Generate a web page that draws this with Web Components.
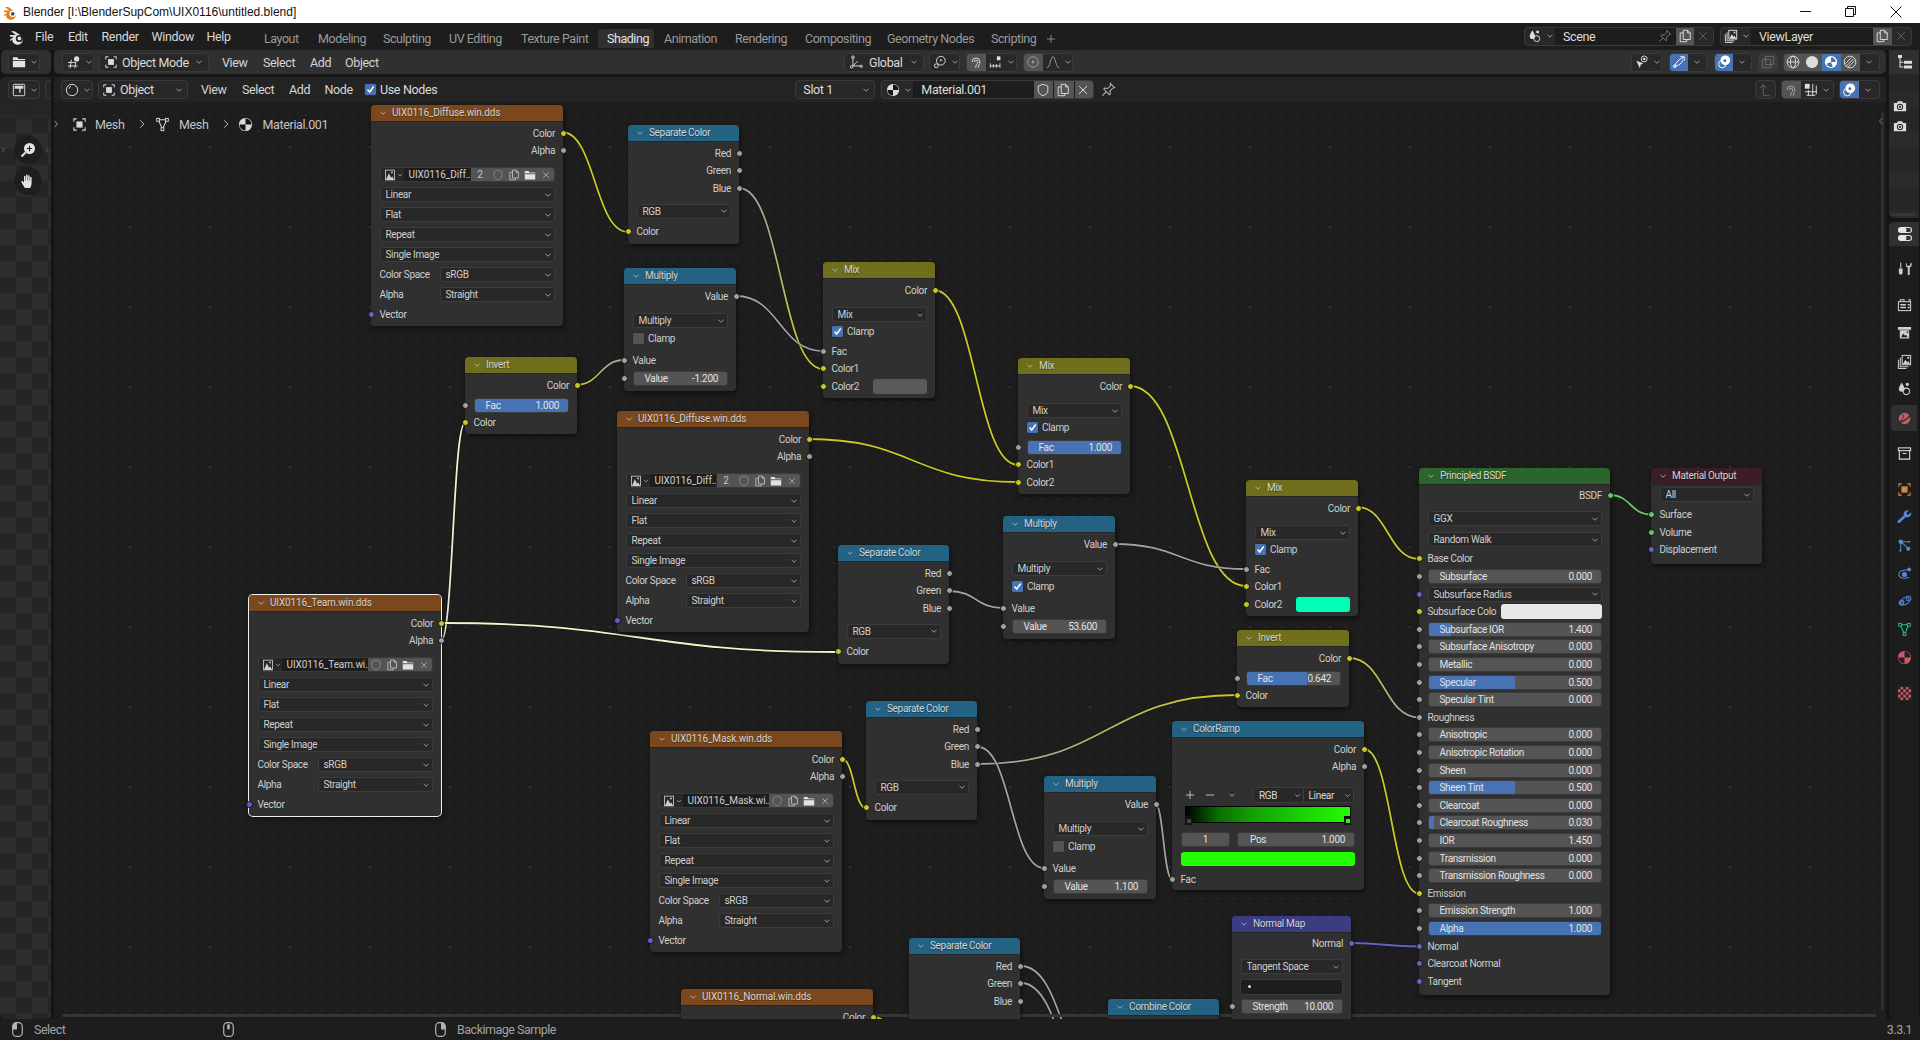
<!DOCTYPE html>
<html>
<head>
<meta charset="utf-8">
<title>Blender</title>
<style>
  html, body { margin: 0; padding: 0; width: 1920px; height: 1040px; overflow: hidden; background: #151515; }
  body { font-family: Roboto, "Liberation Sans", sans-serif; }
</style>
</head>
<body>
<bl-app>
  <bl-node-editor slot="editor">
    <bl-wires></bl-wires>

    <bl-image-node x="371" y="105" name="UIX0116_Diffuse.win.dds" short="UIX0116_Diff…" num="2"></bl-image-node>
    <bl-image-node x="617" y="411" name="UIX0116_Diffuse.win.dds" short="UIX0116_Diff…" num="2"></bl-image-node>
    <bl-image-node x="249" y="595" name="UIX0116_Team.win.dds" short="UIX0116_Team.wi…" sel></bl-image-node>
    <bl-image-node x="650" y="731" name="UIX0116_Mask.win.dds" short="UIX0116_Mask.wi…"></bl-image-node>
    <bl-image-node x="681" y="989" name="UIX0116_Normal.win.dds" clipped></bl-image-node>

    <bl-separate-node x="628" y="125"></bl-separate-node>
    <bl-separate-node x="838" y="545"></bl-separate-node>
    <bl-separate-node x="866" y="701"></bl-separate-node>
    <bl-separate-node x="909" y="938" clipped></bl-separate-node>

    <bl-multiply-node x="624" y="268" val="-1.200"></bl-multiply-node>
    <bl-multiply-node x="1003" y="516" val="53.600" clamp></bl-multiply-node>
    <bl-multiply-node x="1044" y="776" val="1.100"></bl-multiply-node>

    <bl-mix-node x="823" y="262" swatch="#5a5a5a"></bl-mix-node>
    <bl-mix-node x="1018" y="358" fac="1.000"></bl-mix-node>
    <bl-mix-node x="1246" y="480" swatch="#00ffb4"></bl-mix-node>

    <bl-invert-node x="465" y="357" val="1.000" pct="100"></bl-invert-node>
    <bl-invert-node x="1237" y="630" val="0.642" pct="64.2"></bl-invert-node>

    <bl-node x="1172" y="721" w="192" h="169" kind="conv" label="ColorRamp">
      <bl-sock out c="y">Color</bl-sock>
      <bl-sock out c="g">Alpha</bl-sock>
      <bl-ramp></bl-ramp>
      <bl-sock c="g" mt="4.25">Fac</bl-sock>
    </bl-node>

    <bl-node x="1232" y="916" w="119" h="110" kind="vec" label="Normal Map">
      <bl-sock out c="p" mt="-1">Normal</bl-sock>
      <bl-sel mt="7.25">Tangent Space</bl-sel>
      <bl-uvfield></bl-uvfield>
      <bl-sock c="g" mt="2.5"><bl-slider label="Strength" val="10.000"></bl-slider></bl-sock>
    </bl-node>

    <bl-node x="1108" y="999" w="111" h="60" kind="conv" label="Combine Color"></bl-node>

    <bl-principled-node x="1419" y="468"></bl-principled-node>

    <bl-node x="1651" y="468" w="111" h="96" kind="out" label="Material Output">
      <bl-sel>All</bl-sel>
      <bl-sock c="n" mt="3.6">Surface</bl-sock>
      <bl-sock c="n">Volume</bl-sock>
      <bl-sock c="p">Displacement</bl-sock>
    </bl-node>
  </bl-node-editor>
</bl-app>

<script>
const ICONS = {
  chev: '<path class="s" d="M4 6l4 4 4-4"/>',
  right: '<path class="s" d="M5.5 3l5 5-5 5"/>',
  left: '<path class="s" d="M10.5 3l-5 5 5 5"/>',
  obj: '<path class="s" d="M2 5V2h3M11 2h3v3M14 11v3h-3M5 14H2v-3"/><rect class="f" x="4.7" y="4.7" width="6.6" height="6.6"/>',
  folder: '<path class="f" d="M1 2.5h5l1.5 2H15V14H1z"/><path d="M1 6.3h14" stroke="#333" stroke-width="1"/>',
  noded: '<rect class="s" x="1.5" y="1.5" width="13" height="13" rx="1"/><path class="f" d="M3 3h10v3.5h-3.2V11H8.2V6.5H3z"/>',
  xsnap: '<path class="s" d="M1 8.5h9M1 12.5h11M5 5.5l-1.5 9.5M10 8l-1 7"/><circle class="f" cx="11" cy="4.5" r="3"/>',
  sphere: '<circle class="s" cx="8" cy="8" r="6.5"/><path class="s" d="M4.5 6.5a4 4 0 0 1 2.2-2.6"/>',
  mesh: '<path class="s" d="M3.5 3h9L8 13z"/><rect x="1.8" y="1.5" width="3" height="3" fill="#1d1d1d" stroke="currentColor"/><rect x="11.2" y="1.5" width="3" height="3" fill="#1d1d1d" stroke="currentColor"/><rect x="6.5" y="11.5" width="3" height="3" fill="#1d1d1d" stroke="currentColor"/>',
  mat: '<circle class="f" cx="8" cy="8" r="7"/><path fill="#151515" d="M8 8V1.6A6.4 6.4 0 0 1 14.4 8zM8 8v6.4A6.4 6.4 0 0 1 1.6 8z"/>',
  zoom: '<circle class="f" cx="9.5" cy="6.5" r="5.5"/><path d="M9.5 3.8v5.4M6.8 6.5h5.4" stroke="#222" stroke-width="1.2"/><path d="M5.5 10.5l-4 4" stroke="currentColor" stroke-width="2"/>',
  hand: '<path class="f" d="M5 15c-1-1.2-3-4.5-3.6-6-.3-1 1-1.4 1.6-.6L4 9.6V3.5c0-1 1.5-1 1.5 0V7.4H6V2.2c0-1 1.6-1 1.6 0v5.2h.5V3c0-1 1.5-1 1.5 0v4.6h.5V4.6c0-1 1.5-1 1.5 0V10c0 2-.8 3.4-1.4 5z"/>',
  x: '<path class="s" d="M3.5 3.5l9 9M12.5 3.5l-9 9"/>',
  plus: '<path class="s" d="M8 2.5v11M2.5 8h11"/>',
  minus: '<path class="s" d="M2.5 8h11"/>',
  shield: '<path class="s" d="M8 1.5l5.5 2v5c0 3-2.5 5-5.5 6-3-1-5.5-3-5.5-6v-5z"/>',
  copy: '<path class="s" d="M6 1.5h5l3 3v7.5H6zM11 1.5v3h3M6 4.5H2.5v10H10V12"/>',
  pin: '<path class="s" d="M10 1.5l4.5 4.5-2 .5-3 3 .5 3-1 1-6-6 1-1 3 .5 3-3zM5.5 10.5L1.5 14.5"/>',
  img: '<rect class="s" x="2" y="1.5" width="12" height="13"/><path class="f" d="M2.5 14.5l4-9 3 6 1.5-2 2.5 5z"/><rect class="f" x="9.5" y="3.5" width="2.2" height="2.2"/>',
  cam: '<path class="f" d="M1 4.5h3.5l1-2h5l1 2H15v9.5H1z"/><circle cx="8" cy="9" r="3.6" fill="#222"/><circle class="f" cx="8" cy="9" r="2.5"/><circle cx="8" cy="9" r="1.2" fill="#222"/>',
  scene: '<path class="f" d="M5 1.5c1.2 2.5 3 4.2 3 7 0 1.8-1.3 3-3 3s-3-1.2-3-3c0-2.8 1.8-4.5 3-7z"/><circle class="s" cx="10" cy="11" r="3.4"/><circle class="f" cx="11" cy="3.5" r="1.7"/>',
  layer: '<path class="s" d="M3.5 4v9.5H12M1.5 6v9.5H10"/><rect class="s" x="5.5" y="1.5" width="9" height="10"/><path class="f" d="M6 11l3-5 2 3 1-1.5 2 3.5z"/><rect class="f" x="11" y="3" width="2" height="2"/>',
  globalx: '<path class="s" d="M4.5 3v9.5H14M4.5 12.5L10 7"/><circle class="s" cx="4.5" cy="2.5" r="1.5"/><circle class="s" cx="3" cy="13.5" r="1.5"/><circle class="s" cx="14" cy="13" r="1.3"/>',
  link: '<circle class="s" cx="9" cy="6.5" r="5"/><circle cx="3.8" cy="12.3" r="2.2" fill="#282828" stroke="currentColor" stroke-width="1.1"/><circle class="f" cx="9" cy="6" r="1.1"/>',
  magnet: '<path class="s" stroke-width="1.5" d="M3.5 8a4.5 4.5 0 0 1 9 0c0 3-2 3.5-2 6.5M6 8a2 2 0 0 1 4 0c0 2.5-2.5 3.5-2.5 6.5"/>',
  snapinc: '<path class="s" d="M1.5 9.5v5M5 10.5v4M8.5 10.5v4M12.5 9.5v5M1.5 12.5h11"/><rect class="f" x="9" y="1.5" width="4" height="4.5"/>',
  prop: '<circle class="s" cx="8" cy="8" r="6"/><circle class="f" cx="8" cy="8" r="1.6"/>',
  curve: '<path class="s" d="M1 14.5C5 14.5 5 2 8 2s3 12.5 7 12.5"/>',
  selx: '<path class="f" d="M1.5 6.5l8 3-3 1.5-1 4z"/><circle class="s" cx="10.5" cy="4.5" r="3.4"/><circle class="f" cx="10.5" cy="4.5" r="1.5"/>',
  gizmo: '<path class="s" d="M3 13C4.5 8 8 5 13.5 2.5M9.5 2h4.5v4.5M3 13c5-1 8-3.5 9.5-7"/><circle class="s" cx="3" cy="13" r="1.5"/>',
  over: '<circle class="s" cx="6" cy="10.5" r="4.2"/><circle class="f" cx="9.5" cy="6" r="5.5"/><circle cx="9" cy="6.5" r="1.7" fill="#4772b3"/>',
  xray: '<rect class="s" x="5" y="1.5" width="9.5" height="9.5" rx="1"/><rect class="s" x="1.5" y="5" width="9.5" height="9.5" rx="1"/><rect class="f" x="5" y="8" width="1.2" height="1.2"/>',
  wire: '<circle class="s" cx="8" cy="8" r="6.7"/><ellipse class="s" cx="8" cy="8" rx="3" ry="6.7"/><path class="s" d="M1.3 8h13.4"/>',
  solid: '<circle class="f" cx="8" cy="8" r="7"/>',
  matsph: '<circle class="f" cx="8" cy="8" r="7"/><path fill="#4772b3" d="M8 2.6V8l5.4 0A5.4 5.4 0 0 0 8 2.6zM8 8l-5 2a5.4 5.4 0 0 0 7 3.5z"/>',
  rend: '<circle class="s" cx="8" cy="8" r="6.7"/><path class="s" d="M4 12.5l8-8M6 13.7l7-7M2.6 10l7-7"/>',
  up: '<path class="s" d="M2.5 5.5L6 2l3.5 3.5M6 2v11.5l2 1h5"/>',
  gridsnap: '<rect class="f" x="1" y="1" width="5.5" height="5.5"/><path class="s" d="M10 1v14M14 3v10M1 10h14M3 14h10M5 8v7"/>',
  tree: '<rect class="f" x="1" y="1" width="4" height="3"/><path class="s" d="M3 4v9h3.5M3 8.2h3.5"/><rect class="f" x="7" y="6.8" width="8" height="3"/><rect class="f" x="7" y="11.5" width="8" height="3"/>',
  toggles: '<rect class="s" x="1.5" y="1.5" width="13" height="5" rx="2.5"/><rect class="f" x="1.5" y="1.5" width="8" height="5" rx="2.5"/><rect class="s" x="1.5" y="9.5" width="13" height="5" rx="2.5"/><rect class="f" x="1.5" y="9.5" width="8" height="5" rx="2.5"/>',
  tools: '<path class="s" d="M4 1.5v6"/><path class="f" d="M2 8h4v4.5a2 2 0 0 1-4 0zM9.5 1.5v4l2 1.5v8h2V7l2-1.5v-4L14 3v2h-3.5V3z"/>',
  render: '<rect class="s" x="1.5" y="5" width="13" height="9.5"/><path class="s" d="M3.5 5V3h4v2M12 3h2v2"/><path class="f" d="M3.5 7.5h6V9h-6zM3.5 10.5h6V12h-6zM11.5 7.5h2V9h-2zM11.5 10.5h2V12h-2z"/>',
  output: '<path class="f" d="M1 2h14v3H1zM3 5.5h10v9H3z"/><path fill="#222" d="M4.5 13l2-4 2 2.5 1-1.2 2 2.7zM10.5 7h1.5v1.5h-1.5z"/>',
  world: '<circle class="f" cx="8" cy="8" r="6.2"/><path d="M1 12.5C6 12 12 8 15 3.5" stroke="#2f2f2f" stroke-width="1.4" fill="none"/><path d="M3 2.5c3 .3 5 3 3.5 5S3 9 5 12" stroke="#2f2f2f" stroke-width="1" fill="none"/>',
  box: '<rect class="s" x="1.5" y="2" width="13" height="3"/><path class="s" d="M2.5 5v9h11V5M6 8h4"/>',
  wrench: '<path class="f" d="M15 2.5l-2.8 2.5-1.7-.5-.4-1.8L12.7.5A4.2 4.2 0 0 0 7.3 5.7L1 11.5c-1.2 1.3.6 3.3 2 2l6.4-6a4.2 4.2 0 0 0 5.6-5z"/>',
  part: '<circle class="f" cx="4" cy="4" r="2.4"/><circle class="f" cx="13" cy="4" r="1.1"/><circle class="f" cx="3.5" cy="13.5" r="1.2"/><path class="s" d="M4 4h9M4 4v9.5M4 4l7 6"/><circle class="f" cx="12" cy="11.5" r="2.2"/>',
  phys: '<path class="s" d="M13.5 5.5C9 3 2 5 2 9c0 4 7 5 11 3"/><circle class="f" cx="8" cy="9" r="2.7"/><circle class="f" cx="13" cy="3.5" r="2"/>',
  cons: '<path class="s" d="M2 9.5C2 7 11 1.5 13.5 2.5S15 7 12 9.5 3 13.5 2 9.5z"/><circle class="f" cx="5.5" cy="9" r="2.5"/><circle cx="5.5" cy="9" r="1" fill="#222"/><circle class="s" cx="11.5" cy="5.5" r="1.6"/>',
  tex: '<rect class="f" x="1" y="1" width="14" height="14"/><path fill="#222" d="M1 1h2.8v2.8H1zM6.6 1h2.8v2.8H6.6zM12.2 1H15v2.8h-2.8zM3.8 3.8h2.8v2.8H3.8zM9.4 3.8h2.8v2.8H9.4zM1 6.6h2.8v2.8H1zM6.6 6.6h2.8v2.8H6.6zM12.2 6.6H15v2.8h-2.8zM3.8 9.4h2.8v2.8H3.8zM9.4 9.4h2.8v2.8H9.4zM1 12.2h2.8V15H1zM6.6 12.2h2.8V15H6.6zM12.2 12.2H15V15h-2.8z"/>',
  redmat: '<circle class="f" cx="8" cy="8" r="7"/><path fill="#222" d="M8 8V1.5A6.5 6.5 0 0 1 14.5 8zM8 8v6.5A6.5 6.5 0 0 1 1.5 8z"/>',
  logo: '<path class="f" d="M1 6.5h5.5L1.8 3h3.4l5 3.4a5 5 0 1 1-6.7 6.8 4 4 0 0 1-.2-2.7L1.2 12.2l-.5-1 3.8-3H1z"/><circle cx="9.7" cy="9.8" r="3.3" fill="#1d1d1d"/><circle class="f" cx="9.7" cy="9.8" r="1.8"/>',
  logoc: '<path fill="#e87d0d" d="M1 6.5h5.5L1.8 3h3.4l5 3.4a5 5 0 1 1-6.7 6.8 4 4 0 0 1-.2-2.7L1.2 12.2l-.5-1 3.8-3H1z"/><circle cx="9.7" cy="9.8" r="3.3" fill="#fff"/><circle cx="9.7" cy="9.8" r="1.9" fill="#265787"/>',
  mouseL: '<rect class="s" x="3.5" y="1.5" width="9" height="13" rx="3.5"/><path class="f" d="M3.5 8V5A3.5 3.5 0 0 1 7.5 1.5V8z"/>',
  mouseM: '<rect class="s" x="3.5" y="1.5" width="9" height="13" rx="3.5"/><rect class="f" x="6.8" y="3" width="2.4" height="5" rx="1"/>',
  mouseR: '<rect class="s" x="3.5" y="1.5" width="9" height="13" rx="3.5"/><path class="f" d="M8.5 8V1.5A3.5 3.5 0 0 1 12.5 5V8z"/>'
};

const SOCK = { y: "#c7c729", g: "#a1a1a1", p: "#6363c7", n: "#63c763" };

class BlBase extends HTMLElement {
  constructor() {
    super();
    this.attachShadow({ mode: "open" });
  }
  connectedCallback() { this.render(); }
  attr(n, d) { const v = this.getAttribute(n); return v === null ? d : v; }
  draw(css, html) { this.shadowRoot.innerHTML = `<style>${css}</style>${html}`; }
}

class BlIcon extends BlBase {
  render() {
    const size = this.attr("size", 16);
    this.draw(`
      :host { display: inline-flex; flex: none; width: ${size}px; height: ${size}px; }
      svg { width: 100%; height: 100%; display: block; }
      .s { fill: none; stroke: currentColor; stroke-width: 1.1; }
      .f { fill: currentColor; }
    `, `<svg viewBox="0 0 16 16">${ICONS[this.attr("name", "x")] || ""}</svg>`);
  }
}

// one cell of a rounded widget group
class BlCell extends BlBase {
  render() {
    const w = this.attr("w", "");
    const on = this.attr("on", "");
    const bg = on === "blue" ? "#4772b3" : on === "grey" ? "#545454" : on === "dark" ? "#1d1d1d" : "transparent";
    const icon = this.attr("icon", "");
    const isize = this.attr("isize", 14);
    this.draw(`
      :host { display: flex; align-items: center; flex: none; box-sizing: border-box; height: 100%; background: ${bg};
        ${w ? `width:${w}px;` : ""} padding: 0 ${this.attr("pad", 3)}px; gap: 3px; color: ${this.attr("color", "#dcdcdc")};
        ${this.hasAttribute("sep") ? "border-left:1px solid #1a1a1a;" : ""} ${this.hasAttribute("center") ? "justify-content:center;" : ""} }
      .t { flex: 1; white-space: nowrap; overflow: hidden; padding-left: ${this.attr("tl", 0)}px; }
      .v { color: #cfcfcf; }
    `, `${icon ? `<bl-icon name="${icon}" size="${isize}"></bl-icon>` : ""}
        ${this.hasAttribute("text") ? `<span class="t"><slot></slot></span>` : ""}
        ${this.attr("after", "") ? `<bl-icon name="${this.attr("after")}" size="14" style="color:#7a7a7a"></bl-icon>` : ""}
        ${this.hasAttribute("chev") ? `<bl-icon class="v" name="chev" size="10"></bl-icon>` : ""}`);
  }
}

class BlGroup extends BlBase {
  render() {
    this.draw(`
      :host { display: flex; flex: none; box-sizing: border-box; height: ${this.attr("h", 19)}px; margin-left: ${this.attr("ml", 0)};
        border: 1px solid #3a3a3a; border-radius: 4px; overflow: hidden; background: ${this.attr("bg", "#282828")};
        font-size: 12.5px; letter-spacing: -0.35px; color: #dcdcdc; }
    `, `<slot></slot>`);
  }
}

class BlMenu extends BlBase {
  render() {
    const w = this.attr("w", "");
    this.draw(`
      :host { display: block; flex: none; ${w ? `width:${w}px;` : ""} margin-left: ${this.attr("ml", 0)}px;
        font-size: 12.5px; letter-spacing: -0.35px; color: ${this.attr("color", "#d4d4d4")}; white-space: nowrap; }
    `, `<slot></slot>`);
  }
}

class BlTitleBar extends BlBase {
  render() {
    this.draw(`
      :host { display: flex; align-items: center; height: 23px; background: #fff; color: #111;
        font: 12px "Liberation Sans", sans-serif; padding-left: 3px; box-sizing: border-box; }
      span { margin-left: 4px; flex: 1; }
      .ctl { width: 45px; height: 23px; display: flex; align-items: center; justify-content: center; color: #111; }
      .end { width: 2px; }
    `, `<bl-icon name="logoc" size="16"></bl-icon>
        <span>Blender  [I:\\BlenderSupCom\\UIX0116\\untitled.blend]</span>
        <div class="ctl"><svg width="11" height="11"><path d="M0 5.5h11" stroke="#111"/></svg></div>
        <div class="ctl"><svg width="11" height="11"><path d="M.5 2.5h8v8h-8zM2.5 2.5v-2h8v8h-2" fill="none" stroke="#111"/></svg></div>
        <div class="ctl"><svg width="12" height="12"><path d="M.5.5l11 11M11.5.5l-11 11" stroke="#111"/></svg></div>
        <div class="end"></div>`);
  }
}

class BlTopBar extends BlBase {
  render() {
    const menus = [["File", 33], ["Edit", 33.5], ["Render", 50], ["Window", 55], ["Help", 47]];
    const tabs = [["Layout", 54], ["Modeling", 65], ["Sculpting", 66], ["UV Editing", 72], ["Texture Paint", 86], ["Shading", 57],
      ["Animation", 71], ["Rendering", 70], ["Compositing", 82], ["Geometry Nodes", 104], ["Scripting", 56]];
    this.draw(`
      :host { display: flex; align-items: stretch; height: 27px; background: #1d1d1d; box-sizing: border-box; position: relative; }
      .logo { width: 35px; flex: none; display: flex; align-items: center; padding-left: 9px; box-sizing: border-box; color: #e4e4e4; }
      .menu { display: flex; align-items: center; height: 27px; padding-bottom: 1px; box-sizing: border-box; width: 219px; flex: none; }
      .tabs { display: flex; height: 19px; margin-top: 6px; align-items: center; font-size: 12.5px; letter-spacing: -.45px; color: #9a9a9a; }
      .tab { padding: 0 0 0 10px; height: 19px; line-height: 20px; white-space: nowrap; box-sizing: border-box; flex: none; }
      .tab.on { background: #303030; color: #e6e6e6; border-radius: 4px 4px 0 0; padding-left: 9px; margin-left: 1px; }
      .plus { margin-left: 8px; color: #9a9a9a; }
      .right { margin-left: auto; display: flex; align-items: center; padding-right: 8px; padding-bottom: 1px; box-sizing: border-box; }
    `, `<div class="logo"><bl-icon name="logo" size="17"></bl-icon></div>
      <div class="menu">${menus.map(m => `<bl-menu w="${m[1]}" color="#d8d8d8">${m[0]}</bl-menu>`).join("")}</div>
      <div class="tabs">${tabs.map(t => `<div class="tab ${t[0] === "Shading" ? "on" : ""}" style="width:${t[0] === "Shading" ? t[1] - 1 : t[1]}px">${t[0]}</div>`).join("")}
        <bl-icon class="plus" name="plus" size="12"></bl-icon></div>
      <div class="right">
        <bl-group>
          <bl-cell w="30" icon="scene" chev></bl-cell>
          <bl-cell w="120" on="dark" text tl="4" after="pin" sep>Scene</bl-cell>
          <bl-cell w="19" on="grey" icon="copy" sep pad="2"></bl-cell>
          <bl-cell w="19" icon="x" color="#5d5d5d" pad="2"></bl-cell>
        </bl-group>
        <bl-group ml="6px">
          <bl-cell w="30" icon="layer" chev></bl-cell>
          <bl-cell w="121" on="dark" text tl="4" sep>ViewLayer</bl-cell>
          <bl-cell w="20" on="grey" icon="copy" sep pad="2"></bl-cell>
          <bl-cell w="19" icon="x" color="#5d5d5d" pad="2"></bl-cell>
        </bl-group>
      </div>`);
  }
}

class BlBar extends BlBase {
  render() {
    this.draw(`
      :host { display: flex; align-items: center; height: ${this.attr("h", 24)}px; box-sizing: border-box; flex: none;
        background: ${this.attr("bg", "#303030")}; border-radius: ${this.attr("radius", "5px")}; padding: 0 6px 0 ${this.attr("pl", 8)}px; }
    `, `<slot></slot>`);
  }
}

class BlViewHeader extends BlBase {
  render() {
    this.draw(`:host { display: block; margin-bottom: 3px; } .push { margin-left: auto; display: flex; align-items: center; }`, `
      <bl-bar>
        <bl-group><bl-cell w="30" icon="xsnap" chev pad="4"></bl-cell></bl-group>
        <bl-group ml="5px"><bl-cell w="108" icon="obj" chev text tl="1" pad="4">Object Mode</bl-cell></bl-group>
        <bl-menu ml="13" w="41">View</bl-menu><bl-menu w="47">Select</bl-menu><bl-menu w="35">Add</bl-menu><bl-menu w="60">Object</bl-menu>
        <bl-group ml="439px"><bl-cell w="78" icon="globalx" chev text tl="3" pad="4">Global</bl-cell></bl-group>
        <bl-group ml="5px"><bl-cell w="29" icon="link" chev pad="3"></bl-cell></bl-group>
        <bl-group ml="6px"><bl-cell w="19" on="grey" icon="magnet" pad="2"></bl-cell><bl-cell w="30" icon="snapinc" chev pad="3"></bl-cell></bl-group>
        <bl-group ml="6px"><bl-cell w="19" on="grey" icon="prop" pad="2" color="#9a9a9a"></bl-cell><bl-cell w="29" icon="curve" chev pad="3" color="#9a9a9a"></bl-cell></bl-group>
        <div class="push">
          <bl-group><bl-cell w="29" icon="selx" chev pad="3"></bl-cell></bl-group>
          <bl-group ml="7px"><bl-cell w="18" on="blue" icon="gizmo" pad="2" color="#fff"></bl-cell><bl-cell w="18" chev pad="4"></bl-cell></bl-group>
          <bl-group ml="7px"><bl-cell w="18" on="blue" icon="over" pad="2" color="#fff"></bl-cell><bl-cell w="18" chev pad="4"></bl-cell></bl-group>
          <bl-group ml="6px" bg="#3a3a3a"><bl-cell w="18" icon="xray" pad="2" color="#6f6f6f"></bl-cell></bl-group>
          <bl-group ml="5px">
            <bl-cell w="19" on="grey" icon="wire" pad="2"></bl-cell><bl-cell w="19" on="grey" icon="solid" pad="2"></bl-cell>
            <bl-cell w="19" on="blue" icon="matsph" pad="2" color="#fff"></bl-cell><bl-cell w="19" on="grey" icon="rend" pad="2"></bl-cell>
            <bl-cell w="19" chev pad="4"></bl-cell>
          </bl-group>
        </div>
      </bl-bar>`);
  }
}

class BlNodeEditor extends BlBase {
  render() {
    this.draw(`
      :host { display: block; position: relative; height: 942px; overflow: hidden; background-color: #1d1d1d;
        background-image: radial-gradient(circle at 1px 1px, #333 1px, transparent 1px), radial-gradient(circle at 1px 1px, #2a2a2a .7px, transparent 1px);
        background-size: 80px 80px, 16px 16px; background-position: 75px 69px, 11px 5px; }
      .crumb { display: flex; align-items: center; height: 16px; margin-top: 14px; padding-left: 0; font-size: 12.5px;
        letter-spacing: -.35px; color: #c4c4c4; white-space: nowrap; }
      .crumb bl-icon { color: #d8d8d8; }
      .sep { color: #b0b0b0; }
      .vbar { position: absolute; right: 2px; top: 35px; bottom: 8px; width: 3px; background: #2c2c2c; border-radius: 2px; }
      .hbar { position: absolute; left: 8px; right: 9px; bottom: 2px; height: 3px; background: #363636; border-radius: 2px; }
      .coll { position: absolute; right: 0; top: 39px; color: #9a9a9a; }
    `, `
      <bl-bar bg="#232323" radius="5px 5px 0 0" h="25" pl="7">
        <bl-group><bl-cell w="30" icon="sphere" chev pad="3"></bl-cell></bl-group>
        <bl-group ml="5px"><bl-cell w="88" icon="obj" chev text tl="1" pad="3">Object</bl-cell></bl-group>
        <bl-menu ml="13" w="41">View</bl-menu><bl-menu w="47">Select</bl-menu><bl-menu w="35.5">Add</bl-menu><bl-menu w="39.5">Node</bl-menu>
        <bl-check on label="Use Nodes" style="height:19px;font-size:12.5px;letter-spacing:-.35px;color:#dcdcdc"></bl-check>
        <bl-group ml="358px"><bl-cell w="78" chev text tl="4" pad="3">Slot 1</bl-cell></bl-group>
        <bl-group ml="6px">
          <bl-cell w="31" icon="mat" chev pad="4"></bl-cell>
          <bl-cell w="120" on="dark" text tl="4" sep>Material.001</bl-cell>
          <bl-cell w="20" on="grey" icon="shield" sep pad="2"></bl-cell>
          <bl-cell w="21" on="grey" icon="copy" sep pad="2"></bl-cell>
          <bl-cell w="19" on="grey" icon="x" sep pad="1"></bl-cell>
        </bl-group>
        <bl-icon name="pin" size="15" style="margin-left:7px;color:#b8b8b8"></bl-icon>
        <div style="margin-left:auto;display:flex;align-items:center">
          <bl-group bg="#2a2a2a"><bl-cell w="19" icon="up" pad="2" color="#666"></bl-cell></bl-group>
          <bl-group ml="5px"><bl-cell w="19" on="grey" icon="magnet" pad="2" color="#aaa"></bl-cell><bl-cell w="32" icon="gridsnap" chev pad="3"></bl-cell></bl-group>
          <bl-group ml="5px"><bl-cell w="19" on="blue" icon="over" pad="2" color="#fff"></bl-cell><bl-cell w="20" chev pad="4"></bl-cell></bl-group>
        </div>
      </bl-bar>
      <div class="crumb">
        <bl-icon class="sep" name="right" size="10" style="margin-left:-3px"></bl-icon>
        <bl-icon name="obj" size="15" style="margin-left:11px"></bl-icon><span style="margin-left:8px">Mesh</span>
        <bl-icon class="sep" name="right" size="12" style="margin-left:12px"></bl-icon>
        <bl-icon name="mesh" size="15" style="margin-left:6.5px"></bl-icon><span style="margin-left:9px">Mesh</span>
        <bl-icon class="sep" name="right" size="12" style="margin-left:12px"></bl-icon>
        <bl-icon name="mat" size="15" style="margin-left:6px"></bl-icon><span style="margin-left:9px">Material.001</span>
      </div>
      <slot></slot>
      <div class="vbar"></div>
      <bl-icon class="coll" name="left" size="10"></bl-icon>
      <div class="hbar"></div>`);
  }
}

// node on the free canvas; x,y are in window coordinates
class BlNode extends BlBase {
  render() {
    const kinds = { img: "#7a481c", conv: "#246283", mix: "#6e6e1d", shader: "#2b652b", out: "#3c1d26", vec: "#3c3c83" };
    const sel = this.hasAttribute("sel");
    const kind = this.attr("kind", "conv");
    this.draw(`
      :host { position: absolute; left: ${this.attr("x") - 54}px; top: ${this.attr("y") - 77}px; width: ${this.attr("w")}px;
        height: ${this.attr("h", 100)}px; box-sizing: border-box; background: #303030; border-radius: 4px; z-index: 1;
        box-shadow: ${sel ? "0 0 0 1px #f0f0f0," : ""} 1px 2px 5px rgba(0,0,0,.55); color: #cfcfcf; font-size: 10px; letter-spacing: -.32px; display: block; }
      .head { display: flex; align-items: center; height: 15.5px; background: ${kinds[kind]}; border-radius: 4px 4px 0 0;
        color: #d4d4d4; padding-left: 7px; gap: 4px; box-shadow: 0 1px 0 rgba(0,0,0,.2); text-shadow: 0 1px 1px rgba(0,0,0,.4); white-space: nowrap;
        ${kind === "img" ? "letter-spacing: -.15px;" : ""} }
      .body { display: flex; flex-direction: column; padding-top: 3.75px; }
    `, `<div class="head"><bl-icon name="chev" size="10"></bl-icon><span>${this.attr("label", "")}</span></div>
        <div class="body"><slot></slot></div>`);
  }
}

class BlSock extends BlBase {
  render() {
    const out = this.hasAttribute("out");
    this.draw(`
      :host { display: flex; flex: none; position: relative; align-items: center; height: ${this.attr("h", 17.5)}px; margin-top: ${this.attr("mt", 0)}px;
        box-sizing: border-box; padding: 0 8px 0 8.5px; ${out ? "justify-content: flex-end;" : ""} white-space: nowrap; gap: 3px; }
      .dot { position: absolute; ${out ? "right" : "left"}: -3.5px; top: 50%; margin-top: -3.5px; width: 7px; height: 7px; box-sizing: border-box; border-radius: 50%;
        background: ${SOCK[this.attr("c", "g")]}; border: .5px solid #111; }
    `, `<span class="dot"></span><slot></slot>`);
  }
}

class BlSel extends BlBase {
  render() {
    const label = this.attr("label", "");
    this.draw(`
      :host { display: flex; flex: none; align-items: center; height: 15px; margin: ${this.attr("mt", 0)}px 8px 0 8.5px; white-space: nowrap; }
      label { width: 60px; flex: none; }
      .box { flex: 1; height: 15px; box-sizing: border-box; background: #282828; border: 1px solid #3c3c3c; border-radius: 3px; display: flex; align-items: center;
        padding: 0 1px 0 5px; color: #cfcfcf; min-width: 0; }
      .box span { flex: 1; overflow: hidden; }
    `, `${label ? `<label>${label}</label>` : ""}<div class="box"><span><slot></slot></span><bl-icon name="chev" size="10"></bl-icon></div>`);
  }
}

class BlSlider extends BlBase {
  render() {
    const pct = this.attr("pct", 0);
    this.draw(`
      :host { display: block; flex: 1; min-width: 0; height: 15px; }
      .f { position: relative; display: flex; align-items: center; justify-content: space-between; height: 15px; box-sizing: border-box; border-radius: 3px;
        padding: 0 9px 0 11px; color: #e2e2e2; border: 1px solid #3a3a3a; overflow: hidden; white-space: nowrap;
        background: linear-gradient(90deg, #4772b3 ${pct}%, #545454 ${pct}%); }
    `, `<div class="f"><span>${this.attr("label", "")}</span><span>${this.attr("val", "")}</span></div>`);
  }
}

class BlCheck extends BlBase {
  render() {
    const on = this.hasAttribute("on");
    this.draw(`
      :host { display: flex; flex: none; align-items: center; height: ${this.attr("h", 20)}px; margin-left: ${this.attr("pad", 0)}px; gap: 3px; white-space: nowrap; }
      .b { width: 11px; height: 11px; border-radius: 2.5px; background: ${on ? "#4772b3" : "#545454"}; border: .5px solid #2a2a2a; display: flex; flex: none; }
    `, `<div class="b">${on ? `<svg viewBox="0 0 11 11" width="11" height="11"><path d="M2.5 5.5l2.2 2.5 4-5.5" fill="none" stroke="#fff" stroke-width="1.5"/></svg>` : ""}</div><span>${this.attr("label", "")}</span>`);
  }
}

class BlSwatch extends BlBase {
  render() {
    this.draw(`:host { display: block; flex: none; margin-left: auto; width: ${this.attr("w", 54)}px; height: 15px; border-radius: 3px; background: ${this.attr("color", "#888")}; }`, "");
  }
}

class BlImageRow extends BlBase {
  render() {
    const num = this.attr("num", "");
    this.draw(`
      :host { display: flex; flex: none; height: 15px; margin: ${this.attr("mt", 0)}px 8px 0 8.5px; box-sizing: border-box; border-radius: 3px; overflow: hidden; border: 1px solid #3a3a3a; background: #282828; letter-spacing: -.1px; }
      .ic { width: 23px; flex: none; display: flex; align-items: center; padding-left: 3px; gap: 0; box-sizing: border-box; }
      .nm { flex: 1; background: #1d1d1d; padding-left: 5px; line-height: 13px; overflow: hidden; white-space: nowrap; color: #cfcfcf; min-width: 0; }
      .n, .b { flex: none; width: 15.6px; background: #545454; display: flex; align-items: center; justify-content: center; margin-left: .5px; color: #c4c4c4; }
    `, `<div class="ic"><bl-icon name="img" size="12"></bl-icon><bl-icon name="chev" size="8"></bl-icon></div>
        <div class="nm"><slot></slot></div>
        ${num ? `<div class="n" style="width:19px">${num}</div>` : ""}
        <div class="b"><bl-icon name="shield" size="12" style="color:#8a8a8a"></bl-icon></div>
        <div class="b"><bl-icon name="copy" size="12"></bl-icon></div>
        <div class="b" style="color:#e2e2e2"><bl-icon name="folder" size="12"></bl-icon></div>
        <div class="b"><bl-icon name="x" size="10"></bl-icon></div>`);
  }
}

class BlRamp extends BlBase {
  render() {
    this.draw(`
      :host { display: block; margin: 11.75px 9px 0 9px; flex: none; }
      .ctl { display: flex; align-items: center; height: 16px; color: #d8d8d8; padding-left: 3px; }
      .dd { height: 16px; box-sizing: border-box; background: #282828; border: 1px solid #3c3c3c; display: flex; align-items: center; padding: 0 1px 0 5px; width: 50.5px; }
      .dd span { flex: 1; }
      .grad { position: relative; height: 17px; margin: 3px 4px 0; box-sizing: border-box; border: 1px solid #000;
        background: linear-gradient(90deg, #000, #0a6f00 20%, #13a000 40%, #1bd000 70%, #22ff00); }
      .hd { position: absolute; bottom: -3px; width: 7px; height: 9px; background: #111; }
      .hd i { display: block; margin: 3px 1.5px 0; width: 4px; height: 4px; }
      .row { display: flex; height: 15px; margin-top: 9px; gap: 7px; }
      .fld { height: 15px; box-sizing: border-box; background: #545454; border-radius: 3px; display: flex; align-items: center; justify-content: center; color: #e0e0e0; border: 1px solid #3a3a3a; }
      .col { height: 14px; margin-top: 5px; background: #22ff00; border-radius: 3px; }
    `, `
      <div class="ctl">
        <bl-icon name="plus" size="12"></bl-icon><bl-icon name="minus" size="12" style="margin-left:8px"></bl-icon>
        <bl-icon name="chev" size="10" style="margin-left:11px"></bl-icon>
        <div class="dd" style="margin-left:16px;border-radius:3px 0 0 3px"><span>RGB</span><bl-icon name="chev" size="9"></bl-icon></div>
        <div class="dd" style="border-left:0;border-radius:0 3px 3px 0"><span>Linear</span><bl-icon name="chev" size="9"></bl-icon></div>
      </div>
      <div class="grad">
        <div class="hd" style="left:-1px"><i style="background:#444"></i></div>
        <div class="hd" style="right:-1px"><i style="background:#22ff00"></i></div>
      </div>
      <div class="row">
        <div class="fld" style="width:49px">1</div>
        <div class="fld" style="flex:1;justify-content:space-between;padding:0 9px 0 12px"><span>Pos</span><span>1.000</span></div>
      </div>
      <div class="col"></div>`);
  }
}

class BlUvField extends BlBase {
  render() {
    this.draw(`
      :host { display: block; height: 16px; margin: 5px 8px 0 8px; box-sizing: border-box; background: #1d1d1d; border: 1px solid #3a3a3a; border-radius: 3px; flex: none; position: relative; }
      i { position: absolute; left: 7px; top: 5px; width: 3px; height: 3px; background: #ddd; border-radius: 50%; }
    `, `<i></i>`);
  }
}

// composite nodes, repeated several times in the tree
class BlImageNode extends BlBase {
  render() {
    const sel = this.hasAttribute("sel") ? "sel" : "";
    const rows = this.hasAttribute("clipped") ? "" : `
        <bl-sock out c="g">Alpha</bl-sock>
        <bl-image-row mt="7.75" num="${this.attr("num", "")}">${this.attr("short")}</bl-image-row>
        <bl-sel mt="5">Linear</bl-sel>
        <bl-sel mt="5">Flat</bl-sel>
        <bl-sel mt="5">Repeat</bl-sel>
        <bl-sel mt="5">Single Image</bl-sel>
        <bl-sel mt="5" label="Color Space">sRGB</bl-sel>
        <bl-sel mt="5" label="Alpha">Straight</bl-sel>
        <bl-sock c="p" mt="3.25">Vector</bl-sock>`;
    this.draw(`:host { display: contents; }`, `
      <bl-node x="${this.attr("x")}" y="${this.attr("y")}" w="192" h="221" kind="img" label="${this.attr("name")}" ${sel}>
        <bl-sock out c="y">Color</bl-sock>${rows}
      </bl-node>`);
  }
}

class BlSeparateNode extends BlBase {
  render() {
    const rest = this.hasAttribute("clipped") ? "" : `
        <bl-sel mt="6.75">RGB</bl-sel>
        <bl-sock c="y" mt="4.25">Color</bl-sock>`;
    this.draw(`:host { display: contents; }`, `
      <bl-node x="${this.attr("x")}" y="${this.attr("y")}" w="111" h="119" kind="conv" label="Separate Color">
        <bl-sock out c="g">Red</bl-sock>
        <bl-sock out c="g">Green</bl-sock>
        <bl-sock out c="g">Blue</bl-sock>${rest}
      </bl-node>`);
  }
}

class BlMultiplyNode extends BlBase {
  render() {
    this.draw(`:host { display: contents; }`, `
      <bl-node x="${this.attr("x")}" y="${this.attr("y")}" w="112" h="123" kind="conv" label="Multiply">
        <bl-sock out c="g">Value</bl-sock>
        <bl-sel mt="8.25">Multiply</bl-sel>
        <bl-check pad="8" label="Clamp" ${this.hasAttribute("clamp") ? "on" : ""}></bl-check>
        <bl-sock c="g" mt="3.25">Value</bl-sock>
        <bl-sock c="g" mt=".5"><bl-slider label="Value" val="${this.attr("val")}"></bl-slider></bl-sock>
      </bl-node>`);
  }
}

class BlMixNode extends BlBase {
  render() {
    const fac = this.attr("fac", "");
    const swatch = this.attr("swatch", "");
    this.draw(`:host { display: contents; }`, `
      <bl-node x="${this.attr("x")}" y="${this.attr("y")}" w="112" h="136" kind="mix" label="Mix">
        <bl-sock out c="y">Color</bl-sock>
        <bl-sel mt="8.25">Mix</bl-sel>
        <bl-check pad="8" h="18" label="Clamp" on></bl-check>
        <bl-sock c="g" mt="2.25">${fac ? `<bl-slider label="Fac" val="${fac}" pct="100"></bl-slider>` : "Fac"}</bl-sock>
        <bl-sock c="y">Color1</bl-sock>
        <bl-sock c="y">Color2${swatch ? `<bl-swatch color="${swatch}" w="54"></bl-swatch>` : ""}</bl-sock>
      </bl-node>`);
  }
}

class BlInvertNode extends BlBase {
  render() {
    this.draw(`:host { display: contents; }`, `
      <bl-node x="${this.attr("x")}" y="${this.attr("y")}" w="112" h="77" kind="mix" label="Invert">
        <bl-sock out c="y">Color</bl-sock>
        <bl-sock c="g" mt="2.5"><bl-slider label="Fac" val="${this.attr("val")}" pct="${this.attr("pct")}"></bl-slider></bl-sock>
        <bl-sock c="y">Color</bl-sock>
      </bl-node>`);
  }
}

class BlPrincipledNode extends BlBase {
  render() {
    const rows = [
      ["y", "Base Color"], ["g", "Subsurface", "0.000"], ["p", "Subsurface Radius", "sel"], ["y", "Subsurface Colo", "col"],
      ["g", "Subsurface IOR", "1.400", 13], ["g", "Subsurface Anisotropy", "0.000"], ["g", "Metallic", "0.000"],
      ["g", "Specular", "0.500", 50], ["g", "Specular Tint", "0.000"], ["g", "Roughness"],
      ["g", "Anisotropic", "0.000"], ["g", "Anisotropic Rotation", "0.000"], ["g", "Sheen", "0.000"], ["g", "Sheen Tint", "0.500", 50],
      ["g", "Clearcoat", "0.000"], ["g", "Clearcoat Roughness", "0.030", 3], ["g", "IOR", "1.450"], ["g", "Transmission", "0.000"],
      ["g", "Transmission Roughness", "0.000"], ["y", "Emission"], ["g", "Emission Strength", "1.000"], ["g", "Alpha", "1.000", 100],
      ["p", "Normal"], ["p", "Clearcoat Normal"], ["p", "Tangent"]
    ];
    const rowHtml = rows.map((r, i) => {
      let inner = r[1];
      if (r[2] === "sel") inner = `<bl-sel style="flex:1;margin:0">${r[1]}</bl-sel>`;
      else if (r[2] === "col") inner = `${r[1]}<bl-swatch color="#e8e8e8" w="101"></bl-swatch>`;
      else if (r[2]) inner = `<bl-slider label="${r[1]}" val="${r[2]}" pct="${r[3] || 0}"></bl-slider>`;
      return `<bl-sock c="${r[0]}" h="17.6" ${i === 0 ? 'mt="3.2"' : ""}>${inner}</bl-sock>`;
    }).join("");
    this.draw(`:host { display: contents; }`, `
      <bl-node x="${this.attr("x")}" y="${this.attr("y")}" w="191" h="527" kind="shader" label="Principled BSDF">
        <bl-sock out c="n" mt="-1">BSDF</bl-sock>
        <bl-sel mt="7.25">GGX</bl-sel>
        <bl-sel mt="6">Random Walk</bl-sel>
        ${rowHtml}
      </bl-node>`);
  }
}

// links between sockets, in window coordinates: x1 y1 x2 y2 from-colour to-colour
const WIRES = [
  [562, 132, 628, 232, "y", "y"], [739, 188, 823, 369, "g", "y"], [736, 296, 823, 351, "g", "g"],
  [576, 385, 624, 360, "y", "g"], [441, 641, 465, 423, "w", "W"], [441, 623, 838, 652, "W", "W"],
  [808, 439, 1018, 482, "y", "y"], [934, 290, 1018, 465, "y", "y"], [1130, 386, 1246, 586, "y", "y"],
  [949, 591, 1003, 608, "g", "g"], [1114, 544, 1246, 569, "g", "g"], [1357, 507, 1419, 559, "y", "y"],
  [1349, 658, 1419, 717.5, "y", "g"], [978, 764, 1237, 695, "g", "y"], [978, 747, 1044, 868, "g", "g"],
  [842, 759, 866, 808, "y", "y"], [1155, 803, 1172, 879, "g", "g"], [1364, 749, 1419, 893.5, "y", "y"],
  [1351, 943, 1419, 946.5, "p", "p"], [1610, 495, 1651, 514.5, "n", "n"],
  [1021, 966, 1108, 1090, "g", "g"], [1021, 983, 1108, 1120, "g", "g"], [873, 1017, 920, 1060, "y", "y"]
];

class BlWires extends BlBase {
  render() {
    const col = { ...SOCK, w: "#e6e6d8", W: "#f4f4c8" };
    let defs = "", paths = "";
    WIRES.forEach((w, i) => {
      const [x1, y1, x2, y2, a, b] = w;
      const h = Math.abs(x2 - x1) * 0.5;
      const d = `M${x1} ${y1}C${x1 + h} ${y1} ${x2 - h} ${y2} ${x2} ${y2}`;
      defs += `<linearGradient id="w${i}" gradientUnits="userSpaceOnUse" x1="${x1}" y1="${y1}" x2="${x2}" y2="${y2 + 0.01}"><stop offset=".05" stop-color="${col[a]}"/><stop offset=".95" stop-color="${col[b]}"/></linearGradient>`;
      paths += `<path d="${d}" fill="none" stroke="#000" stroke-opacity=".45" stroke-width="3"/><path d="${d}" fill="none" stroke="url(#w${i})" stroke-width="1.8"/>`;
    });
    this.draw(`
      :host { position: absolute; left: 0; top: 0; width: 1832px; height: 942px; display: block; pointer-events: none; }
      svg { display: block; }
    `, `<svg width="1832" height="942" viewBox="54 77 1832 942"><defs>${defs}</defs>${paths}</svg>`);
  }
}

class BlLeftColumn extends BlBase {
  render() {
    this.draw(`
      :host { display: flex; flex-direction: column; width: 51px; margin-right: 3px; flex: none; }
      .top { padding-left: 1px; }
      .ed { height: 942px; margin-top: 3px; border-radius: 5px 0 5px 5px; position: relative; overflow: hidden; display: flex; flex-direction: column; align-items: center;
        background: linear-gradient(#252525 34px, rgba(37,37,37,0) 46px), repeating-conic-gradient(#2d2d2d 0 25%, #252525 0 50%) 0 8px / 32px 32px; }
      .hd { height: 25px; width: 100%; display: flex; align-items: center; padding-left: 8px; box-sizing: border-box; flex: none; }
      .btn { width: 28px; height: 28px; border-radius: 50%; background: #1e1e1e; display: flex; align-items: center; justify-content: center; color: #e4e4e4; flex: none; }
      .edge { position: absolute; top: 69px; color: #9a9a9a; }
    `, `
      <div class="top"><bl-bar pl="7"><bl-group><bl-cell w="30" icon="folder" chev pad="3" style="color:#e4e4e4"></bl-cell></bl-group></bl-bar></div>
      <div class="ed">
        <div class="hd"><bl-group><bl-cell w="30" icon="noded" chev pad="3"></bl-cell></bl-group><bl-group ml="5px"><bl-cell w="20"></bl-cell></bl-group></div>
        <div class="btn" style="margin:34px 0 3px 4px"><bl-icon name="zoom" size="16"></bl-icon></div>
        <div class="btn" style="margin-left:4px"><bl-icon name="hand" size="16"></bl-icon></div>
        <bl-icon class="edge" name="right" size="8" style="left:-1px"></bl-icon>
        <bl-icon class="edge" name="left" size="8" style="right:0"></bl-icon>
      </div>`);
  }
}

class BlRightColumn extends BlBase {
  render() {
    const tabs = [["tools", "#cfcfcf", 14], ["render", "#cfcfcf", 20.5], ["output", "#cfcfcf", 11.5], ["layer", "#cfcfcf", 13], ["scene", "#cfcfcf", 11],
      ["world", "#c75a66", 9, 1], ["box", "#e0e0e0", 14], ["obj", "#d08a4a", 20.5], ["wrench", "#5a86d4", 11.5], ["part", "#5a86d4", 12], ["phys", "#5a86d4", 12],
      ["cons", "#5a86d4", 12], ["mesh", "#1fc48a", 12], ["redmat", "#c75a66", 12], ["tex", "#c75a66", 20]];
    this.draw(`
      :host { display: flex; flex-direction: column; width: 30px; margin-left: 3px; flex: none; }
      .out { height: 168px; background: #282828; border-radius: 5px 0 0 5px; display: flex; flex-direction: column; position: relative;
        background-image: repeating-linear-gradient(#2a2a2a 0 20px, #262626 20px 40px); }
      .out .hd { height: 24px; padding-left: 8px; display: flex; align-items: center; color: #dcdcdc; background: #303030; }
      .out .cam { color: #dcdcdc; padding-left: 3px; height: 20px; display: flex; align-items: center; margin-left: 1px; }
      .sb { position: absolute; left: 1px; right: 3px; bottom: 2px; height: 3px; background: #363636; border-radius: 2px; }
      .tabs { height: 797px; margin-top: 4px; background: #1d1d1d; border-radius: 5px 0 0 5px; display: flex; flex-direction: column; align-items: flex-start; }
      .top { width: 100%; height: 24px; background: #303030; border-radius: 5px 0 0 0; display: flex; align-items: center; padding-left: 8px; box-sizing: border-box; color: #e4e4e4; flex: none; }
      .t { width: 26px; margin-left: 2px; height: 16px; display: flex; justify-content: center; align-items: center; flex: none; }
      .t.on { background: #303030; height: 26px; border-radius: 4px 0 0 4px; }
    `, `
      <div class="out">
        <div class="hd"><bl-icon name="tree" size="16"></bl-icon></div>
        <div class="cam" style="margin-top:22px"><bl-icon name="cam" size="14"></bl-icon></div>
        <div class="cam"><bl-icon name="cam" size="14"></bl-icon></div>
        <div class="sb"></div>
      </div>
      <div class="tabs">
        <div class="top"><bl-icon name="toggles" size="16"></bl-icon></div>
        ${tabs.map(t => `<div class="t ${t[3] ? "on" : ""}" style="margin-top:${t[2]}px;color:${t[1]}"><bl-icon name="${t[0]}" size="15"></bl-icon></div>`).join("")}
      </div>`);
  }
}

class BlStatusBar extends BlBase {
  render() {
    this.draw(`
      :host { display: flex; align-items: center; height: 21px; background: #1d1d1d; color: #a2a2a2; font-size: 12.5px; letter-spacing: -.5px; box-sizing: border-box; }
      bl-icon { color: #b4b4b4; }
      .end { margin-left: auto; padding-right: 8px; }
    `, `
      <bl-icon name="mouseL" size="17" style="margin-left:9px"></bl-icon><span style="margin-left:8px;width:186px">Select</span>
      <bl-icon name="mouseM" size="17"></bl-icon><span style="width:195px"></span>
      <bl-icon name="mouseR" size="17"></bl-icon><span style="margin-left:8px">Backimage Sample</span>
      <span class="end">3.3.1</span>`);
  }
}

class BlApp extends BlBase {
  render() {
    this.draw(`
      :host { display: flex; flex-direction: column; width: 1920px; height: 1040px; background: #151515; overflow: hidden; }
      .work { display: flex; height: 969px; flex: none; }
      .center { width: 1832px; flex: none; display: flex; flex-direction: column; }
    `, `
      <bl-title-bar></bl-title-bar>
      <bl-top-bar></bl-top-bar>
      <div class="work">
        <bl-left-column></bl-left-column>
        <div class="center"><bl-view-header></bl-view-header><slot name="editor"></slot></div>
        <bl-right-column></bl-right-column>
      </div>
      <bl-status-bar></bl-status-bar>`);
  }
}

const defs = {
  "bl-icon": BlIcon, "bl-cell": BlCell, "bl-group": BlGroup, "bl-menu": BlMenu, "bl-bar": BlBar,
  "bl-title-bar": BlTitleBar, "bl-top-bar": BlTopBar, "bl-view-header": BlViewHeader, "bl-node-editor": BlNodeEditor,
  "bl-node": BlNode, "bl-sock": BlSock, "bl-sel": BlSel, "bl-slider": BlSlider, "bl-check": BlCheck, "bl-swatch": BlSwatch,
  "bl-image-row": BlImageRow, "bl-ramp": BlRamp, "bl-uvfield": BlUvField, "bl-image-node": BlImageNode,
  "bl-separate-node": BlSeparateNode, "bl-multiply-node": BlMultiplyNode, "bl-mix-node": BlMixNode, "bl-invert-node": BlInvertNode,
  "bl-principled-node": BlPrincipledNode, "bl-wires": BlWires, "bl-left-column": BlLeftColumn, "bl-right-column": BlRightColumn,
  "bl-status-bar": BlStatusBar, "bl-app": BlApp
};
Object.entries(defs).forEach(([name, cls]) => customElements.define(name, cls));
</script>
</body>
</html>
